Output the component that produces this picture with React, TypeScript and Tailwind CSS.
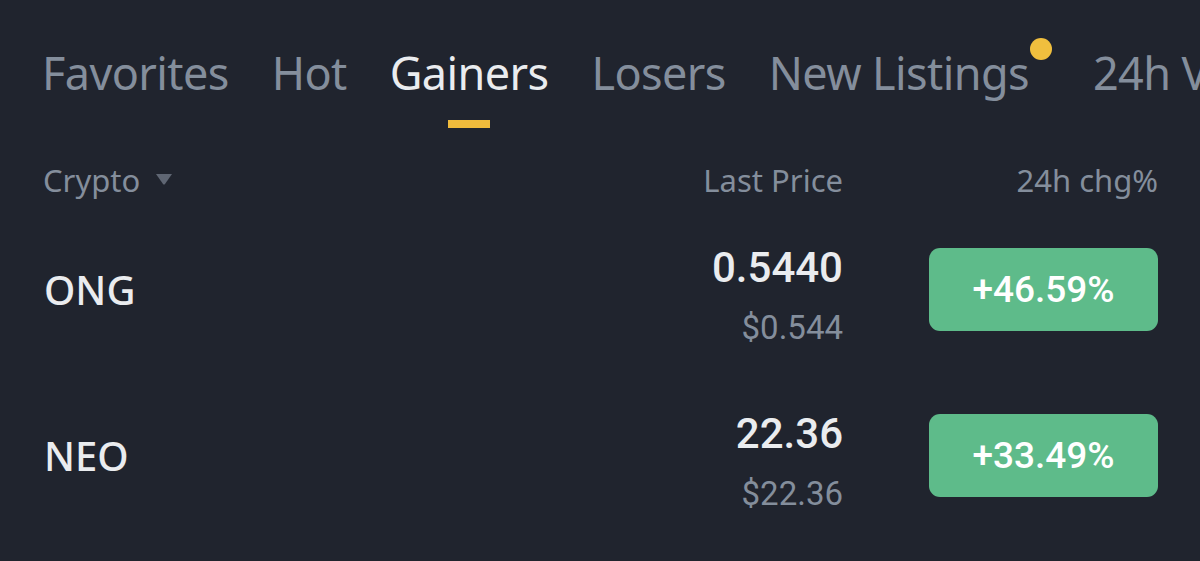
import React from "react";

const tabs = ["Favorites", "Hot", "Gainers", "Losers", "New Listings", "24h Vol"];

const rows = [
  { name: "ONG", price: "0.5440", usd: "$0.544", chg: "+46.59%" },
  { name: "NEO", price: "22.36", usd: "$22.36", chg: "+33.49%" },
];

export default function App() {
  return (
    <div className="w-[1200px] h-[561px] overflow-hidden bg-[#20242e] text-[#eaecef]" style={{ fontFamily: '"Noto Sans", sans-serif' }}>
      {/* Tabs */}
      <div className="flex items-start pl-[42px] pt-[45px] whitespace-nowrap gap-[43px]">
        {tabs.map((t) => (
          <div
            key={t}
            className={"relative flex flex-col items-center shrink-0 " + (t === "New Listings" ? "mr-[21px]" : "")}
          >
            <span
              className={
                "text-[45px] leading-[56px] tracking-[-0.6px] " +
                (t === "Gainers" ? "text-[#eaecef]" : "text-[#848e9c]")
              }
            >
              {t}
            </span>
            {t === "Gainers" ? (
              <div className="mt-[19px] w-[42px] h-[8px] bg-[#f0bb3c]" />
            ) : null}
            {t === "New Listings" ? (
              <div className="absolute right-[-23px] top-[-7px] w-[22px] h-[22px] rounded-full bg-[#f0bf3e]" />
            ) : null}
          </div>
        ))}
      </div>

      {/* Header */}
      <div className="flex items-center pl-[43px] pr-[42px] mt-[32px] text-[31px] leading-[40px] text-[#848e9c]">
        <div className="flex-1 flex items-center gap-[15px]">
          <span>Crypto</span>
          <svg width="18" height="12" viewBox="0 0 18 12" className="mt-[-2px]">
            <path d="M1 1 H17 L10 11 Q9 12.2 8 11 Z" fill="#5f6673" />
          </svg>
        </div>
        <div className="text-right">Last Price</div>
        <div className="w-[229px] ml-[86px] text-right">24h chg%</div>
      </div>

      {/* Rows */}
      <div className="flex flex-col mt-[48px] gap-[83px]">
        {rows.map((r) => (
          <div key={r.name} className="flex items-center pl-[44px] pr-[42px] h-[83px]">
            <div className="flex-1 text-[40px] font-medium text-[#eaecef]">{r.name}</div>
            <div className="flex flex-col items-end mt-[12px]" style={{ fontFamily: "Roboto, sans-serif" }}>
              <span className="text-[42px] leading-[48px] font-medium text-[#eaecef]">{r.price}</span>
              <span className="text-[33px] leading-[40px] mt-[16px] text-[#848e9c]">{r.usd}</span>
            </div>
            <div
              className="w-[229px] h-[83px] ml-[86px] rounded-[11px] bg-[#5ebb8a] flex items-center justify-center text-[37px] font-medium text-white"
              style={{ fontFamily: "Roboto, sans-serif" }}
            >
              {r.chg}
            </div>
          </div>
        ))}
      </div>
    </div>
  );
}
